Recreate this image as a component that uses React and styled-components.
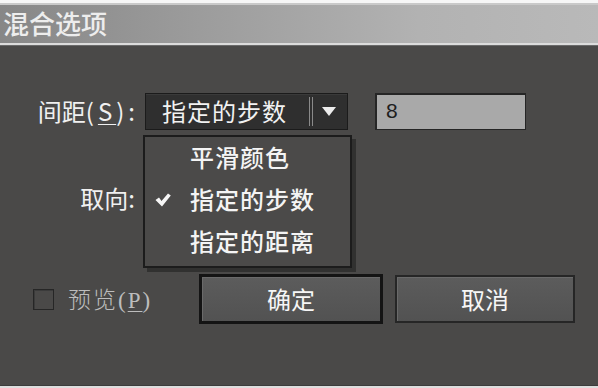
import React from "react";
import styled, { createGlobalStyle } from "styled-components";

const Global = createGlobalStyle`
  html, body { margin: 0; padding: 0; background: #4a4948; overflow: hidden; }
  * { box-sizing: border-box; }
`;

const CJK = `"Noto Sans CJK SC", "Noto Sans", sans-serif`;

const Window = styled.div`
  width: 598px;
  height: 388px;
  display: flex;
  flex-direction: column;
  background: #4a4948;
  font-family: ${CJK};
`;

const TopStrip = styled.div`
  height: 5px;
  background: linear-gradient(#f6f6f6 0 3px, #c9c9c9 3px);
`;

const TitleBar = styled.div`
  height: 38px;
  display: flex;
  align-items: center;
  padding-left: 3px;
  padding-bottom: 2px;
  background: linear-gradient(90deg, #878787 0%, #9d9d9d 35%, #b2b2b2 70%, #b9b9b9 100%);
  color: #ededed;
  font-size: 26px;
  line-height: 1;
  font-weight: 500;
`;

const TitleRule = styled.div`
  height: 3px;
  background: linear-gradient(#dcdcdc 0 2px, #6a6a6a 2px);
`;

const Body = styled.div`
  flex: 1;
  display: flex;
  flex-direction: column;
  padding-top: 47px;
`;

const BottomStrip = styled.div`
  height: 3px;
  background: linear-gradient(#3c3c3c 0 1px, #dedede 1px);
`;

const Row = styled.div`
  display: flex;
  align-items: center;
  height: ${(p) => p.$h}px;
  margin-top: ${(p) => p.$mt || 0}px;
`;

const Label = styled.div`
  width: 139px;
  text-align: right;
  color: #f0f0f0;
  font-size: 24px;
  line-height: 1;
  padding-bottom: 2px;
  white-space: nowrap;
`;

const Punct = styled.span`
  letter-spacing: 4px;
`;

const U = styled.span`
  text-decoration: underline;
  text-underline-offset: 3px;
  text-decoration-thickness: 1px;
`;

const SelectWrap = styled.div`
  position: relative;
  margin-left: 6px;
`;

const Select = styled.div`
  width: 203px;
  height: 37px;
  display: flex;
  align-items: center;
  background: #2f2f2f;
  border: 1px solid #1b1b1b;
  box-shadow: inset 0 1px 0 #3a3a3a;
  color: #f2f2f2;
  font-size: 24px;
  letter-spacing: 1px;
  padding-left: 16px;
`;

const SelectText = styled.span`
  flex: 1;
  padding-bottom: 2px;
`;

const Divider = styled.span`
  width: 4px;
  height: 29px;
  border-left: 1px solid #8a8a8a;
  border-right: 1px solid #8a8a8a;
  margin-right: 9px;
`;

const Arrow = styled.svg`
  width: 14px;
  height: 9px;
  margin-right: 11px;
`;

const Menu = styled.div`
  position: absolute;
  left: -2px;
  top: 42px;
  width: 209px;
  height: 133px;
  background: #4b4a49;
  border: 2px solid #1c1c1c;
  box-shadow: 4px 4px 0 rgba(20, 20, 20, 0.45);
  z-index: 2;
`;

const MenuItem = styled.div`
  height: 42px;
  display: flex;
  align-items: center;
  padding-left: 10px;
  padding-bottom: 4px;
  color: #f4f4f4;
  font-size: 24px;
  font-weight: 500;
  letter-spacing: 1px;
`;

const CheckSlot = styled.span`
  width: 35px;
  display: flex;
  align-items: center;
`;

const CheckIcon = styled.svg`
  width: 16px;
  height: 14px;
  margin-top: 3px;
`;

const Field = styled.div`
  width: 151px;
  height: 37px;
  margin-left: 27px;
  background: #a9a9a9;
  border: 2px solid #262626;
  border-right-width: 1px;
  border-bottom-width: 1px;
  display: flex;
  align-items: center;
  padding-left: 9px;
  padding-bottom: 2px;
  color: #1e1e1e;
  font-family: "Liberation Sans", Arial, sans-serif;
  font-size: 21px;
`;

const CheckBox = styled.span`
  width: 21px;
  height: 21px;
  margin-left: 33px;
  border: 1px solid #262626;
  box-shadow: inset 1px 1px 0 #3b3b3b;
  background: #4a4948;
`;

const PreviewLabel = styled.span`
  margin-left: 14px;
  width: 131px;
  color: #bdbdbd;
  font-family: "Liberation Serif", ${CJK};
  font-size: 23px;
  font-weight: 300;
  letter-spacing: 2px;
  padding-bottom: 2px;
`;

const Button = styled.div`
  width: ${(p) => (p.$primary ? 184 : 180)}px;
  height: ${(p) => (p.$primary ? 50 : 48)}px;
  margin-left: ${(p) => p.$ml}px;
  display: flex;
  align-items: center;
  justify-content: center;
  padding-bottom: 2px;
  background: linear-gradient(#5c5c5c, #525252);
  border: ${(p) => (p.$primary ? "3px solid #141414" : "2px solid #262626")};
  box-shadow: inset 1px 1px 0 #6a6a6a;
  color: #f6f6f6;
  font-size: 24px;
`;

function Tick() {
  return (
    <CheckIcon viewBox="0 0 16 14">
      <path d="M0.5 7 L4 4.5 L6.5 8 L13 0.5 L15.8 2.5 L7 13.5 Z" fill="#f6f6f6" />
    </CheckIcon>
  );
}

export default function App() {
  return (
    <Window>
      <Global />
      <TopStrip />
      <TitleBar>混合选项</TitleBar>
      <TitleRule />
      <Body>
        <Row $h={37}>
          <Label>
            间距<Punct>(<U>S</U>):</Punct>
          </Label>
          <SelectWrap>
            <Select>
              <SelectText>指定的步数</SelectText>
              <Divider />
              <Arrow viewBox="0 0 14 9">
                <path d="M0 0 H14 L7 9 Z" fill="#ececec" />
              </Arrow>
            </Select>
            <Menu>
              <MenuItem>
                <CheckSlot />
                平滑颜色
              </MenuItem>
              <MenuItem>
                <CheckSlot>
                  <Tick />
                </CheckSlot>
                指定的步数
              </MenuItem>
              <MenuItem>
                <CheckSlot />
                指定的距离
              </MenuItem>
            </Menu>
          </SelectWrap>
          <Field>8</Field>
        </Row>
        <Row $h={37} $mt={50}>
          <Label>
            取向<Punct>:</Punct>
          </Label>
        </Row>
        <Row $h={50} $mt={57}>
          <CheckBox />
          <PreviewLabel>
            预览(<U>P</U>)
          </PreviewLabel>
          <Button $primary $ml={0}>确定</Button>
          <Button $ml={12}>取消</Button>
        </Row>
      </Body>
      <BottomStrip />
    </Window>
  );
}
